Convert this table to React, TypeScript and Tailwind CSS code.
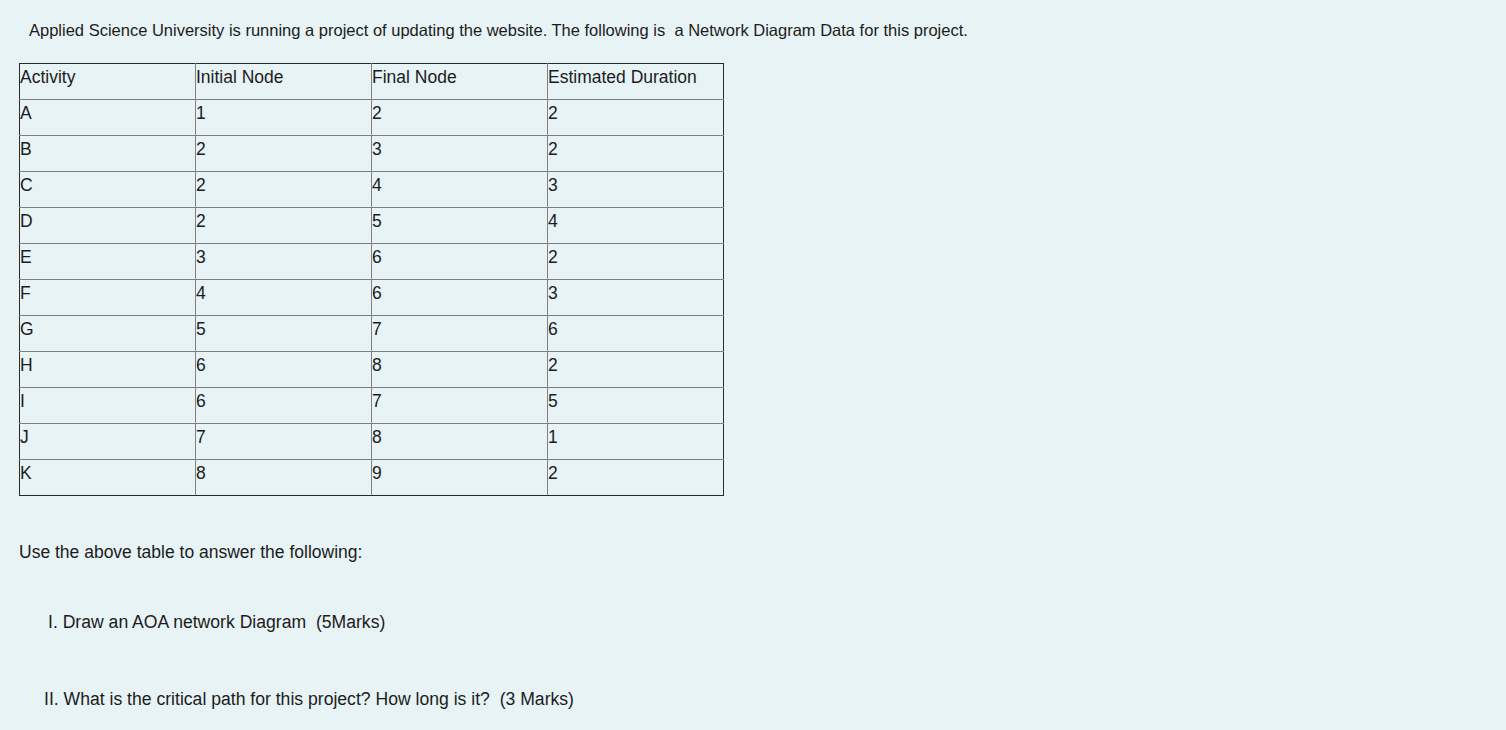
import React from "react";

const rows: [string, string, string, string][] = [
  ["A", "1", "2", "2"],
  ["B", "2", "3", "2"],
  ["C", "2", "4", "3"],
  ["D", "2", "5", "4"],
  ["E", "3", "6", "2"],
  ["F", "4", "6", "3"],
  ["G", "5", "7", "6"],
  ["H", "6", "8", "2"],
  ["I", "6", "7", "5"],
  ["J", "7", "8", "1"],
  ["K", "8", "9", "2"],
];

export default function App() {
  const cell =
    "border border-[#808080] first:border-l-[#2a2a2a] last:border-r-[#2a2a2a] h-[36px] w-[176px] align-top pt-[4px] pl-0 text-left font-normal leading-[19px]";
  return (
    <div className="w-[1506px] h-[730px] bg-[#e7f3f5] text-[#1c1c1c] font-['Liberation_Sans',Arial,sans-serif] overflow-hidden">
      <p className="pl-[29px] pt-[20px] text-[16.5px] leading-[20px] whitespace-pre">
        Applied Science University is running a project of updating the website. The following is  a Network Diagram Data for this project.
      </p>
      <table className="ml-[19px] mt-[23px] border-collapse border border-[#2a2a2a] text-[17.5px]">
        <thead>
          <tr>
            {["Activity", "Initial Node", "Final Node", "Estimated Duration"].map((h) => (
              <th key={h} className={cell + " border-t-[#2a2a2a]"}>{h}</th>
            ))}
          </tr>
        </thead>
        <tbody>
          {rows.map((r, ri) => (
            <tr key={r[0]}>
              {r.map((c, i) => (
                <td key={i} className={ri === rows.length - 1 ? cell + " border-b-[#2a2a2a]" : cell}>{c}</td>
              ))}
            </tr>
          ))}
        </tbody>
      </table>
      <p className="pl-[19px] mt-[45px] text-[17.5px] leading-[22px]">Use the above table to answer the following:</p>
      <p className="pl-[48px] mt-[48px] text-[17.6px] leading-[22px] whitespace-pre">I. Draw an AOA network Diagram  (5Marks)</p>
      <p className="pl-[44px] mt-[55px] text-[17.6px] leading-[22px] whitespace-pre">II. What is the critical path for this project? How long is it?  (3 Marks)</p>
    </div>
  );
}
